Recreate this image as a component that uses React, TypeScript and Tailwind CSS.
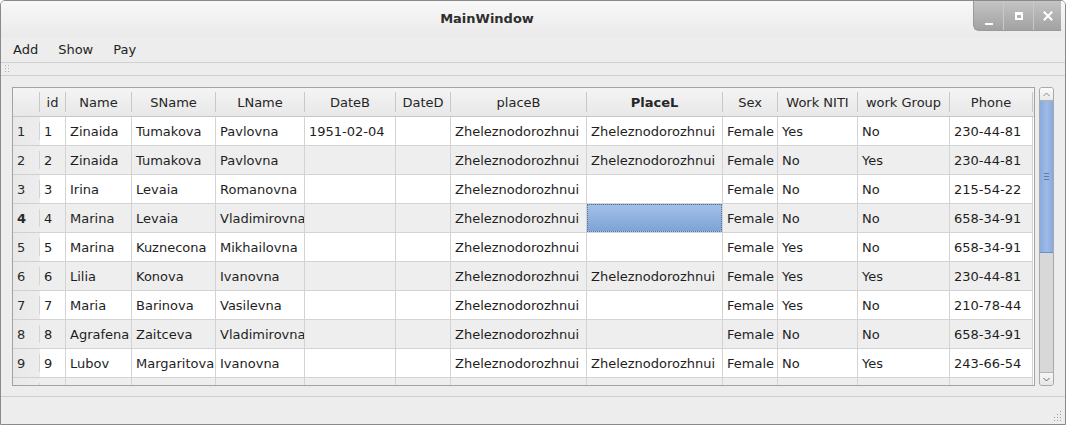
import React from "react";

type Col = { label: string; w: string; bold?: boolean };

const cols: Col[] = [
  { label: "id", w: "w-[26px]" },
  { label: "Name", w: "w-[66px]" },
  { label: "SName", w: "w-[84px]" },
  { label: "LName", w: "w-[89px]" },
  { label: "DateB", w: "w-[91px]" },
  { label: "DateD", w: "w-[55px]" },
  { label: "placeB", w: "w-[136px]" },
  { label: "PlaceL", w: "w-[136px]", bold: true },
  { label: "Sex", w: "w-[55px]" },
  { label: "Work NITI", w: "w-[80px]" },
  { label: "work Group", w: "w-[92px]" },
  { label: "Phone", w: "w-[83px]" },
];

const Z = "Zheleznodorozhnui";
const rows: string[][] = [
  ["1", "Zinaida", "Tumakova", "Pavlovna", "1951-02-04", "", Z, Z, "Female", "Yes", "No", "230-44-81"],
  ["2", "Zinaida", "Tumakova", "Pavlovna", "", "", Z, Z, "Female", "No", "Yes", "230-44-81"],
  ["3", "Irina", "Levaia", "Romanovna", "", "", Z, "", "Female", "No", "No", "215-54-22"],
  ["4", "Marina", "Levaia", "Vladimirovna", "", "", Z, "", "Female", "No", "No", "658-34-91"],
  ["5", "Marina", "Kuznecona", "Mikhailovna", "", "", Z, "", "Female", "Yes", "No", "658-34-91"],
  ["6", "Lilia", "Konova", "Ivanovna", "", "", Z, Z, "Female", "Yes", "Yes", "230-44-81"],
  ["7", "Maria", "Barinova", "Vasilevna", "", "", Z, "", "Female", "Yes", "No", "210-78-44"],
  ["8", "Agrafena", "Zaitceva", "Vladimirovna", "", "", Z, "", "Female", "No", "No", "658-34-91"],
  ["9", "Lubov", "Margaritova", "Ivanovna", "", "", Z, Z, "Female", "No", "Yes", "243-66-54"],
  ["", "", "", "", "", "", "", "", "", "", "", ""],
];

function TitleBar() {
  return (
    <div className="h-[36px] flex bg-gradient-to-b from-[#f8f8f8] to-[#eaeaea] shrink-0">
      <div className="w-[972px] flex items-center justify-center">
        <span className="font-bold text-[13px] text-[#2e2e2e]">MainWindow</span>
      </div>
      <div className="w-[88px] h-[30px] flex bg-gradient-to-b from-[#c4c4c4] to-[#a2a2a2] rounded-bl-[6px] border-l border-b border-[#9a9a9a]">
        <div className="w-[30px] flex items-end justify-center pb-[5px] border-r border-[#c9c9c9]">
          <div className="w-[8px] h-[2px] bg-white" />
        </div>
        <div className="w-[30px] flex items-center justify-center border-r border-[#c9c9c9]">
          <div className="w-[8px] h-[8px] border-[2px] border-t-[3px] border-white" />
        </div>
        <div className="flex-1 flex items-center justify-center">
          <svg width="10" height="10" viewBox="0 0 10 10">
            <path d="M1.5 1.5 L8.5 8.5 M8.5 1.5 L1.5 8.5" stroke="white" strokeWidth="2" strokeLinecap="square" />
          </svg>
        </div>
      </div>
    </div>
  );
}

function MenuBar() {
  return (
    <div className="h-[26px] flex items-center pl-[2px] border-b border-[#cfcfcf] shrink-0 text-[#1f1f1f]">
      <span className="px-[10px]">Add</span>
      <span className="px-[10px]">Show</span>
      <span className="px-[10px]">Pay</span>
    </div>
  );
}

function ToolStrip() {
  return (
    <div className="h-[13px] flex items-center pl-[4px] border-b border-[#cfcfcf] shrink-0">
      <svg width="5" height="8" viewBox="0 0 5 8">
        <rect x="0" y="0" width="1" height="1" fill="#b0b0b0" />
        <rect x="3" y="0" width="1" height="1" fill="#b0b0b0" />
        <rect x="0" y="3" width="1" height="1" fill="#b0b0b0" />
        <rect x="3" y="3" width="1" height="1" fill="#b0b0b0" />
        <rect x="0" y="6" width="1" height="1" fill="#b0b0b0" />
        <rect x="3" y="6" width="1" height="1" fill="#b0b0b0" />
      </svg>
    </div>
  );
}

function Header() {
  return (
    <div className="flex h-[29px] shrink-0 bg-gradient-to-b from-[#f4f4f4] to-[#e8e8e8] border-b border-[#c6c6c6] text-[#262626]">
      <div className="w-[27px] h-full flex items-center shrink-0">
        <div className="ml-auto w-px h-[20px] bg-[#c8c8c8]" />
      </div>
      {cols.map((c) => (
        <div key={c.label} className={`${c.w} h-full flex items-center shrink-0`}>
          <span className={`flex-1 pt-[2px] text-center whitespace-nowrap ${c.bold ? "font-bold" : ""}`}>{c.label}</span>
          <div className="w-px h-[20px] bg-[#c8c8c8]" />
        </div>
      ))}
    </div>
  );
}

function Row({ r, i }: { r: string[]; i: number }) {
  const even = i % 2 === 1;
  const bg = even ? "bg-[#eeeeee]" : "bg-white";
  const num = r[0];
  return (
    <div className="flex h-[29px] shrink-0">
      <div className="w-[27px] h-full flex items-center bg-gradient-to-r from-[#e9e9e9] to-[#ededed] border-b border-[#d0d0d0] shrink-0">
        <span className={`pl-[4px] pt-[2px] flex-1 text-[#2a2a2a] ${i === 3 ? "font-bold" : ""}`}>{num}</span>
        <div className="w-px h-[18px] bg-[#d4d4d4]" />
      </div>
      {cols.map((c, j) => {
        const selected = i === 3 && j === 7;
        return (
          <div
            key={j}
            className={`${c.w} h-full shrink-0 flex items-center px-[4px] overflow-hidden whitespace-nowrap border-r border-b border-[#d3d3d3] text-[#1e1e1e] ${bg}`}
          >
            {selected ? (
              <div className="-mx-[4px] w-[135px] h-[28px] bg-gradient-to-b from-[#a3c0e7] to-[#7ea3d7] border border-dotted border-[#5f7595]" />
            ) : (
              <span className="pt-[2px]">{r[j]}</span>
            )}
          </div>
        );
      })}
    </div>
  );
}

function Table() {
  return (
    <div className="w-[1023px] h-[299px] border border-[#a3a3a3] bg-white overflow-hidden flex flex-col">
      <Header />
      {rows.map((r, i) => (
        <Row key={i} r={r} i={i} />
      ))}
    </div>
  );
}

function ScrollBar() {
  return (
    <div className="w-[15px] h-[299px] flex flex-col border border-[#a9a9a9] rounded-[3px] bg-[#d9d9d9] overflow-hidden">
      <div className="h-[13px] flex items-center justify-center bg-gradient-to-b from-[#fbfbfb] to-[#e9e9e9] border-b border-[#b3b3b3] shrink-0">
        <svg width="7" height="5" viewBox="0 0 7 5">
          <path d="M0.5 4 L3.5 1 L6.5 4" fill="none" stroke="#8a8a8a" strokeWidth="1" />
        </svg>
      </div>
      <div className="h-[152px] shrink-0 bg-gradient-to-r from-[#88aade] via-[#9dbbe6] to-[#88aade] border-b border-[#6d8fc4] flex items-center justify-center">
        <svg width="5" height="7" viewBox="0 0 5 7">
          <rect x="0" y="0" width="5" height="1" fill="#5b7db5" />
          <rect x="0" y="3" width="5" height="1" fill="#5b7db5" />
          <rect x="0" y="6" width="5" height="1" fill="#5b7db5" />
        </svg>
      </div>
      <div className="flex-1 bg-[#d8d8d8]" />
      <div className="h-[13px] flex items-center justify-center bg-gradient-to-b from-[#f6f6f6] to-[#e6e6e6] border-t border-[#b3b3b3] shrink-0">
        <svg width="7" height="5" viewBox="0 0 7 5">
          <path d="M0.5 1 L3.5 4 L6.5 1" fill="none" stroke="#6a6a6a" strokeWidth="1" />
        </svg>
      </div>
    </div>
  );
}

function StatusBar() {
  return (
    <div className="h-[28px] border-t border-[#cfcfcf] flex items-end justify-end pr-[3px] pb-[3px] shrink-0">
      <svg width="10" height="10" viewBox="0 0 10 10">
        {[
          [8, 0], [8, 3], [5, 3], [8, 6], [5, 6], [2, 6], [8, 9], [5, 9], [2, 9],
        ].map(([x, y], k) => (
          <rect key={k} x={x} y={y} width="1" height="1" fill="#a0a0a0" />
        ))}
      </svg>
    </div>
  );
}

export default function App() {
  return (
    <div className="w-[1066px] h-[425px] bg-[#ededed] border border-[#8a8a8a] rounded-t-[5px] overflow-hidden flex flex-col font-['DejaVu_Sans',sans-serif] text-[13px]">
      <TitleBar />
      <MenuBar />
      <ToolStrip />
      <div className="flex-1 flex pl-[11px] pt-[11px] gap-[4px]">
        <Table />
        <ScrollBar />
      </div>
      <StatusBar />
    </div>
  );
}
